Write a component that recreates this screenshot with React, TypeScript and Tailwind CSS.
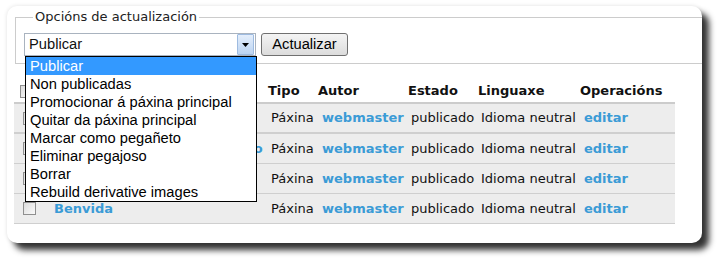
import React from 'react';

const options = [
  'Publicar',
  'Non publicadas',
  'Promocionar á páxina principal',
  'Quitar da páxina principal',
  'Marcar como pegañeto',
  'Eliminar pegajoso',
  'Borrar',
  'Rebuild derivative images',
];

const rows = [
  { title: 'Sobre', thick: true },
  { title: 'Sobre nós e o noso proxecto', thick: false },
  { title: 'Contacto', thick: false },
  { title: 'Benvida', thick: false },
];

const cols = 'grid grid-cols-[36px_215px_50px_90px_70px_102px_98px]';

const Checkbox: React.FC<{ className?: string }> = ({ className = '' }) => (
  <div className={`w-[13px] h-[13px] border border-[#8f8f8f] bg-gradient-to-br from-[#dcdcdc] to-[#fafafa] ${className}`} />
);

export default function App() {
  return (
    <div className="w-[725px] h-[267px] bg-white pt-[6px] pl-[7px] font-['DejaVu_Sans',Verdana,sans-serif] text-[13px] text-[#111]">
      {/* Card */}
      <div className="relative w-[695px] h-[237px] bg-white rounded-[10px] overflow-hidden shadow-[7px_7px_6px_rgba(0,0,0,0.8),0_0_4px_rgba(0,0,0,0.12)]">
        <div className="pl-[8px] pt-[3px]">
          {/* Update options */}
          <fieldset className="w-[700px] border border-[#cccccc] pl-[8px] pb-[7px]">
            <legend className="ml-[9px] px-[2px] leading-[16px] text-[#222]">Opcións de actualización</legend>
            <div className="flex items-start mt-[8px] font-['Liberation_Sans',Arial,sans-serif] text-[14.7px]">
              <div className="relative w-[232px] h-[23px] border border-[#a9b3bf] bg-white flex items-center justify-between">
                <span className="pl-[4px] leading-none">Publicar</span>
                <div className="mr-[1px] w-[17px] h-[21px] border border-[#9ebbe0] rounded-[1px] bg-gradient-to-b from-[#e4eefb] to-[#bcd4f2] flex items-center justify-center">
                  <svg width="7" height="4" viewBox="0 0 7 4">
                    <path d="M0 0h7L3.5 4z" fill="#000" />
                  </svg>
                </div>
                {/* Open list */}
                <div className="absolute left-[0px] top-[22px] z-10 w-[232px] border border-black bg-white">
                  {options.map((o, i) => (
                    <div
                      key={o}
                      className={`h-[18px] pl-[4px] leading-[18px] whitespace-nowrap ${i === 0 ? 'bg-[#3399ff] text-white' : 'text-black'}`}
                    >
                      {o}
                    </div>
                  ))}
                </div>
              </div>
              <button className="ml-[5px] w-[87px] h-[23px] rounded-[3px] border border-[#707070] bg-gradient-to-b from-[#f4f4f4] to-[#dcdcdc] text-black leading-none">
                Actualizar
              </button>
            </div>
          </fieldset>
        </div>

        {/* Content table */}
        <div className="ml-[7px] mt-[16px] w-[661px]">
          <div className={`${cols} h-[24px] items-center border-b-2 border-[#cccccc] font-bold`}>
            <div className="pl-[6px]"><Checkbox /></div>
            <div />
            <div className="pl-[3px]">Tipo</div>
            <div className="pl-[3px]">Autor</div>
            <div className="pl-[3px]">Estado</div>
            <div className="pl-[3px]">Linguaxe</div>
            <div className="pl-[3px]">Operacións</div>
          </div>
          {rows.map((r) => (
            <div
              key={r.title}
              className={`${cols} h-[30px] items-center bg-[#ededed] border-[#cfcfcf] ${r.thick ? 'border-b-2' : 'border-b'} whitespace-nowrap`}
            >
              <div className="pl-[9px]"><Checkbox /></div>
              <div className="pl-[4px] font-bold text-[#3b9bd6]">{r.title}</div>
              <div className="pl-[6px]">Páxina</div>
              <div className="pl-[7px] font-bold text-[#3b9bd6]">webmaster</div>
              <div className="pl-[6px]">publicado</div>
              <div className="pl-[6px]">Idioma neutral</div>
              <div className="pl-[7px] font-bold text-[#3b9bd6]">editar</div>
            </div>
          ))}
        </div>
      </div>
    </div>
  );
}
